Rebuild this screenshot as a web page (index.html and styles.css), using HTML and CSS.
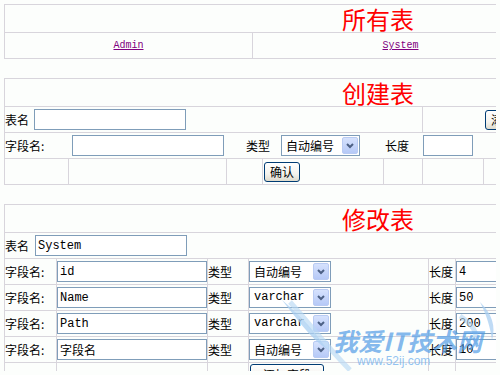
FILE: index.html
```html
<!DOCTYPE html>
<html lang="zh">
<head>
<meta charset="utf-8">
<title>表管理</title>
<link rel="stylesheet" href="styles.css">
</head>
<body>
<div class="tbl">
  <div class="row title">所有表</div>
  <div class="row">
    <div class="cell first w-admin center"><a class="lnk" href="#">Admin</a></div>
    <div class="cell w-system center"><a class="lnk" href="#">System</a></div>
    <div class="cell grow"></div>
  </div>
</div>

<div class="tbl gap">
  <div class="row title">创建表</div>
  <div class="row">
    <div class="cell first w-c2a"><span class="lbl2">表名</span><input class="inp w152 ml5" value=""></div>
    <div class="cell w61"></div>
    <div class="cell grow noline pl2"><button class="btn">添加字段</button></div>
  </div>
  <div class="row">
    <span class="lbl w67">字段名:</span>
    <input class="inp w152" value="">
    <span class="lbl2 ml22">类型</span>
    <div class="sel w79 ml11"><span class="sel-txt cjk">自动编号</span><span class="arr"><svg width="8" height="6" viewBox="0 0 8 6"><path d="M1 1 L4 4 L7 1" fill="none" stroke="#4d6185" stroke-width="2"/></svg></span></div>
    <span class="lbl2 ml25">长度</span>
    <input class="inp w50 ml14" value="">
  </div>
  <div class="row">
    <div class="cell first w63"></div>
    <div class="cell w158"></div>
    <div class="cell w36"></div>
    <div class="cell w121 pl1"><button class="btn">确认</button></div>
    <div class="cell w39"></div>
    <div class="cell w61"></div>
    <div class="cell grow"></div>
  </div>
</div>

<div class="tbl gap">
  <div class="row title">修改表</div>
  <div class="row">
    <span class="lbl2">表名</span><input class="inp w152 ml6" value="System">
  </div>
  <div class="row">
    <div class="cell first w51">字段名:</div>
    <div class="cell w151"><input class="inp w150" value="id"></div>
    <div class="cell w41">类型</div>
    <div class="cell w180"><div class="sel w82"><span class="sel-txt cjk">自动编号</span><span class="arr"><svg width="8" height="6" viewBox="0 0 8 6"><path d="M1 1 L4 4 L7 1" fill="none" stroke="#4d6185" stroke-width="2"/></svg></span></div></div>
    <div class="cell w27">长度</div>
    <div class="cell grow"><input class="inp w160" value="4"></div>
  </div>
  <div class="row">
    <div class="cell first w51">字段名:</div>
    <div class="cell w151"><input class="inp w150" value="Name"></div>
    <div class="cell w41">类型</div>
    <div class="cell w180"><div class="sel w82"><span class="sel-txt">varchar</span><span class="arr"><svg width="8" height="6" viewBox="0 0 8 6"><path d="M1 1 L4 4 L7 1" fill="none" stroke="#4d6185" stroke-width="2"/></svg></span></div></div>
    <div class="cell w27">长度</div>
    <div class="cell grow"><input class="inp w160" value="50"></div>
  </div>
  <div class="row">
    <div class="cell first w51">字段名:</div>
    <div class="cell w151"><input class="inp w150" value="Path"></div>
    <div class="cell w41">类型</div>
    <div class="cell w180"><div class="sel w82"><span class="sel-txt">varchar</span><span class="arr"><svg width="8" height="6" viewBox="0 0 8 6"><path d="M1 1 L4 4 L7 1" fill="none" stroke="#4d6185" stroke-width="2"/></svg></span></div></div>
    <div class="cell w27">长度</div>
    <div class="cell grow"><input class="inp w160" value="200"></div>
  </div>
  <div class="row">
    <div class="cell first w51">字段名:</div>
    <div class="cell w151"><input class="inp w150 cjk" value="字段名"></div>
    <div class="cell w41">类型</div>
    <div class="cell w180"><div class="sel w82"><span class="sel-txt cjk">自动编号</span><span class="arr"><svg width="8" height="6" viewBox="0 0 8 6"><path d="M1 1 L4 4 L7 1" fill="none" stroke="#4d6185" stroke-width="2"/></svg></span></div></div>
    <div class="cell w27">长度</div>
    <div class="cell grow"><input class="inp w160" value="10"></div>
  </div>
  <div class="row last">
    <div class="cell first w51"></div>
    <div class="cell w151"></div>
    <div class="cell w41"></div>
    <div class="cell w180 pl1 top"><button class="btn w74">添加字段</button></div>
    <div class="cell w27"></div>
    <div class="cell grow"></div>
  </div>
</div>

<div class="wm" aria-hidden="true">
  <svg class="wm-swoosh" width="220" height="85" viewBox="0 0 220 85">
    <path d="M2 10 C 18 30, 30 48, 48 60 C 36 44, 24 28, 2 10 Z" fill="#a9cff2" opacity="0.75"/>
    <path d="M10 12 C 30 34, 46 56, 70 80" fill="none" stroke="#b8d8f4" stroke-width="5" opacity="0.65"/>
    <path d="M200 12 C 212 24, 216 36, 212 50 C 210 36, 206 24, 200 12 Z" fill="#a9cff2" opacity="0.75"/>
    <path d="M180 26 C 192 34, 198 42, 196 54" fill="none" stroke="#b8d8f4" stroke-width="5" opacity="0.65"/>
  </svg>
  <div class="wm-t1">我爱IT技术网</div>
  <div class="wm-t2">www.52ij.com</div>
</div>
</body>
</html>
```
FILE: styles.css
```css
html {
  overflow: hidden;
  background: #fcfefc;
}
body {
  margin: 4px;
  overflow: hidden;
  font-family: "Noto Sans CJK SC", sans-serif;
  font-size: 12px;
  color: #000;
  position: relative;
  height: 367px;
}
.tbl {
  width: 748px;
  border: 1px solid #d8d5dc;
  box-sizing: border-box;
}
.gap {
  margin-top: 19px;
}
.row {
  display: flex;
  align-items: center;
  height: 25px;
  border-top: 1px solid #d8d5dc;
  white-space: nowrap;
}
.row:first-child {
  border-top: 0;
}
.title {
  height: 27px;
  justify-content: center;
  color: #ff0000;
  font-size: 24px;
  line-height: 27px;
}
.last {
  height: 20px;
}
.cell {
  flex: none;
  height: 100%;
  box-sizing: border-box;
  border-left: 1px solid #d8d5dc;
  display: flex;
  align-items: center;
  overflow: visible;
}
.cell.first {
  border-left: 0;
}
.cell.noline {
  border-left: 0;
}
.cell.top {
  align-items: flex-start;
  padding-top: 1px;
}
.grow {
  flex: 1;
}
.center {
  justify-content: center;
}
.pl1 { padding-left: 1px; }
.pl2 { padding-left: 2px; }

.w-admin { width: 247px; }
.w-system { width: 296px; }
.w-c2a { width: 417px; }
.w27 { width: 27px; }
.w36 { width: 36px; }
.w39 { width: 39px; }
.w41 { width: 41px; }
.w51 { width: 51px; }
.w61 { width: 61px; }
.w63 { width: 63px; }
.w67 { width: 67px; flex: none; }
.w121 { width: 121px; }
.w151 { width: 151px; }
.w158 { width: 158px; }
.w180 { width: 180px; }

.lnk {
  font-family: "Liberation Mono", monospace;
  font-size: 10px;
  color: #800080;
  text-decoration: underline;
}
.lbl, .lbl2 {
  flex: none;
  line-height: 14px;
}

.inp {
  flex: none;
  margin: 0;
  height: 21px;
  box-sizing: border-box;
  border: 1px solid #7f9db9;
  background: #fff;
  padding: 0 2px;
  font-family: "Liberation Mono", monospace;
  font-size: 12px;
  color: #000;
  outline: none;
}
.inp.cjk, .sel-txt.cjk {
  font-family: "Noto Sans CJK SC", sans-serif;
}
.w50 { width: 50px; }
.w150 { width: 150px; }
.w152 { width: 152px; }
.w160 { width: 160px; }

.sel {
  flex: none;
  display: flex;
  align-items: center;
  height: 21px;
  box-sizing: border-box;
  border: 1px solid #7f9db9;
  background: #fff;
}
.w79 { width: 79px; }
.w82 { width: 82px; }
.sel-txt {
  flex: 1;
  padding-left: 4px;
  font-family: "Liberation Mono", monospace;
  font-size: 12px;
  line-height: 17px;
  overflow: hidden;
}
.arr {
  flex: none;
  width: 16px;
  height: 17px;
  margin: 1px;
  box-sizing: border-box;
  border: 1px solid #b9cbf3;
  border-radius: 2px;
  background: linear-gradient(#d6e2fd, #b6c9f7);
  display: flex;
  align-items: center;
  justify-content: center;
}

.btn {
  flex: none;
  margin: 0;
  height: 20px;
  padding: 0 5px;
  border: 1px solid #003c74;
  border-radius: 3px;
  background: linear-gradient(#ffffff, #f4f3ee 60%, #dedbcd);
  font-family: "Noto Sans CJK SC", sans-serif;
  font-size: 12px;
  line-height: 17px;
  color: #000;
}
.w74 {
  width: 74px;
}

.ml5 { margin-left: 5px; }
.ml6 { margin-left: 6px; }
.ml11 { margin-left: 11px; }
.ml14 { margin-left: 14px; }
.ml22 { margin-left: 22px; }
.ml25 { margin-left: 25px; }

.wm {
  position: absolute;
  left: 276px;
  top: 286px;
  width: 220px;
  height: 85px;
  pointer-events: none;
}
.wm-swoosh {
  position: absolute;
  left: 0;
  top: 0;
}
.wm-t1 {
  position: absolute;
  left: 53px;
  top: 37px;
  font-family: "Noto Sans CJK SC", sans-serif;
  font-size: 25px;
  font-weight: bold;
  font-style: italic;
  line-height: 27px;
  color: rgba(80, 155, 230, 0.7);
  letter-spacing: 0;
}
.wm-t2 {
  position: absolute;
  left: 77px;
  top: 65px;
  font-family: "Liberation Sans", sans-serif;
  font-size: 12px;
  line-height: 12px;
  color: rgba(110, 175, 238, 0.75);
}
```
